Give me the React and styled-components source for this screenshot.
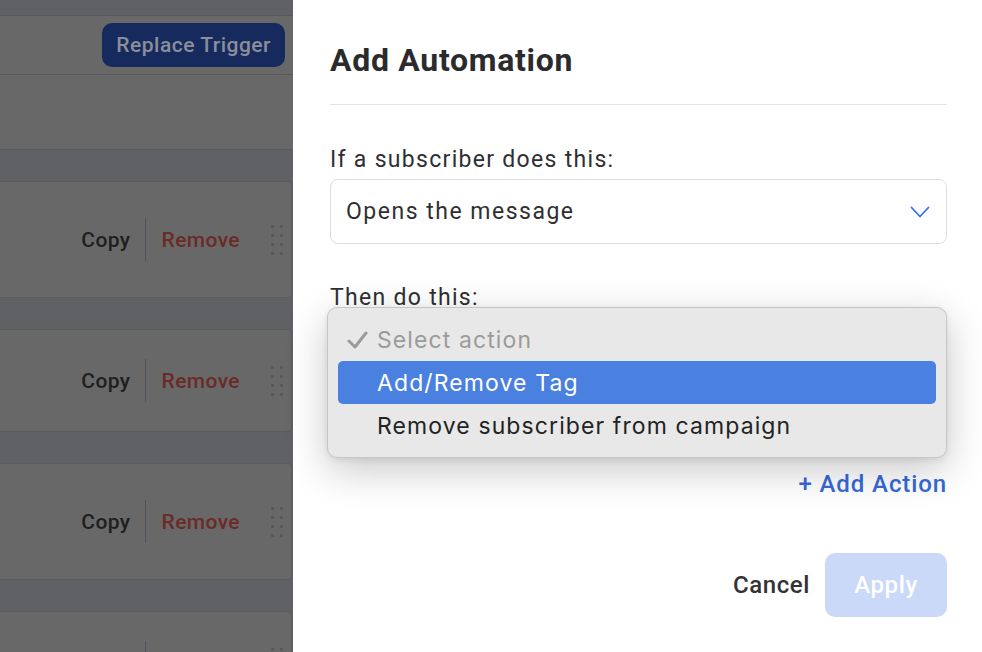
import React from "react";
import styled, { createGlobalStyle } from "styled-components";

const GlobalStyle = createGlobalStyle`
  html, body {
    margin: 0;
    padding: 0;
    height: 100%;
    overflow: hidden;
    background: #606165;
  }
  body {
    font-family: Roboto, "Liberation Sans", Arial, sans-serif;
  }
  #root {
    height: 100%;
  }
`;

const Page = styled.div`
  display: flex;
  height: 652px;
  width: 982px;
`;

/* dimmed page behind the drawer */
const Backdrop = styled.div`
  width: 293px;
  flex-shrink: 0;
  display: flex;
  flex-direction: column;
  background: #606165;
  overflow: hidden;

  & > * {
    flex-shrink: 0;
  }
`;

const TopStrip = styled.div`
  height: 15px;
  border-bottom: 1px solid #58595d;
`;

const HeaderPanel = styled.div`
  height: 59px;
  background: #686868;
  border-bottom: 1px solid #5a5b5f;
  display: flex;
  justify-content: flex-end;
  align-items: flex-start;
  padding: 7px 8px 0 0;
  box-sizing: border-box;
`;

const ReplaceButton = styled.div`
  height: 44px;
  padding: 0 14px;
  border-radius: 10px;
  background: #172a5e;
  color: #8a8f99;
  font-size: 21px;
  letter-spacing: 0.5px;
  font-weight: 500;
  display: flex;
  align-items: center;
`;

const EmptyPanel = styled.div`
  height: 75px;
  background: #686868;
  border-bottom: 1px solid #5a5b5f;
  box-sizing: border-box;
`;

const Card = styled.div`
  height: ${(p) => p.$h}px;
  margin-top: 31px;
  width: 292px;
  background: #686868;
  border: 1px solid #5a5b5f;
  border-left: none;
  border-radius: 0 4px 4px 0;
  box-sizing: border-box;
  display: flex;
  align-items: center;
  justify-content: flex-end;
  padding-right: 8px;
`;

const CardAction = styled.span`
  font-size: 21px;
  letter-spacing: 0.4px;
  font-weight: 500;
  color: ${(p) => (p.$danger ? "#6b2b27" : "#1f1f20")};
`;

const VSep = styled.div`
  width: 1px;
  height: 43px;
  background: #50535d;
  margin: 0 16px 0 14px;
`;

const Dots = styled.div`
  display: grid;
  grid-template-columns: 3px 3px;
  column-gap: 6px;
  row-gap: 6px;
  margin-left: 31px;
`;

const Dot = styled.span`
  width: 3px;
  height: 3px;
  background: #58595e;
`;

/* drawer */
const Drawer = styled.div`
  flex: 1;
  background: #ffffff;
  padding: 40px 35px 0 37px;
  box-sizing: border-box;
  display: flex;
  flex-direction: column;
`;

const Title = styled.h2`
  margin: 0;
  font-size: 32px;
  line-height: 40px;
  letter-spacing: 0.7px;
  font-weight: 700;
  color: #2b2b2d;
`;

const Rule = styled.div`
  height: 1px;
  background: #e1e1e8;
  margin: 24px 0 0;
`;

const Label = styled.div`
  font-size: 23px;
  line-height: 28px;
  letter-spacing: 1.3px;
  color: #2f2f31;
  margin-top: ${(p) => p.$top}px;
`;

const Field = styled.div`
  position: relative;
  margin-top: 5px;
`;

const SelectBox = styled.div`
  height: 65px;
  box-sizing: border-box;
  border: 1px solid ${(p) => (p.$focused ? "#3a6ee8" : "#dcdde3")};
  border-width: ${(p) => (p.$focused ? "2px" : "1px")};
  border-radius: 8px;
  display: flex;
  align-items: center;
  justify-content: space-between;
  padding: 0 16px 0 15px;
  font-size: 23px;
  letter-spacing: 1.5px;
  color: #2f2f31;
`;

const Popup = styled.div`
  position: absolute;
  top: -10px;
  left: -3px;
  right: 0;
  height: 151px;
  box-sizing: border-box;
  background: #e8e8e8;
  border: 1px solid #c6c6c6;
  border-radius: 10px;
  box-shadow: 0 12px 40px rgba(0, 0, 0, 0.22), 0 2px 6px rgba(0, 0, 0, 0.08);
  padding: 10px 10px;
  display: flex;
  flex-direction: column;
  font-family: Inter, Roboto, "Liberation Sans", sans-serif;
  font-size: 23px;
  z-index: 5;
`;

const Option = styled.div`
  height: 43px;
  border-radius: 5px;
  display: flex;
  align-items: center;
  padding-left: 9px;
  color: ${(p) => (p.$muted ? "#9b9b9b" : p.$active ? "#ffffff" : "#232323")};
  background: ${(p) => (p.$active ? "#4a80e0" : "transparent")};
  letter-spacing: 1.1px;
`;

const CheckSlot = styled.span`
  width: 30px;
  display: flex;
  align-items: center;
`;

const AddAction = styled.div`
  align-self: flex-end;
  margin-top: 88px;
  font-size: 24px;
  line-height: 28px;
  letter-spacing: 0.9px;
  font-weight: 500;
  color: #3669d9;
`;

const Footer = styled.div`
  display: flex;
  justify-content: flex-end;
  align-items: center;
  gap: 15px;
  margin-top: 55px;
`;

const CancelButton = styled.span`
  font-size: 24px;
  letter-spacing: 0.6px;
  font-weight: 500;
  color: #333335;
`;

const ApplyButton = styled.div`
  width: 122px;
  height: 64px;
  border-radius: 10px;
  background: #c9d9f7;
  color: #ffffff;
  font-size: 24px;
  letter-spacing: 0.6px;
  font-weight: 500;
  display: flex;
  align-items: center;
  justify-content: center;
`;

const Chevron = () => (
  <svg width="20" height="12" viewBox="0 0 20 12">
    <polyline points="1.5,1.5 10,10.5 18.5,1.5" fill="none" stroke="#3a6ee8" strokeWidth="1.8" strokeLinecap="round" strokeLinejoin="round" />
  </svg>
);

const Check = () => (
  <svg width="21" height="18" viewBox="0 0 21 18">
    <polyline points="2,10 8,16 19,2" fill="none" stroke="#9b9b9b" strokeWidth="3" strokeLinecap="round" strokeLinejoin="round" />
  </svg>
);

const cards = [117, 103, 117, 103];

export default function App() {
  return (
    <>
      <GlobalStyle />
      <Page>
        <Backdrop>
          <TopStrip />
          <HeaderPanel>
            <ReplaceButton>Replace Trigger</ReplaceButton>
          </HeaderPanel>
          <EmptyPanel />
          {cards.map((h, i) => (
            <Card key={i} $h={h}>
              <CardAction>Copy</CardAction>
              <VSep />
              <CardAction $danger>Remove</CardAction>
              <Dots>
                {Array.from({ length: 8 }).map((_, j) => (
                  <Dot key={j} />
                ))}
              </Dots>
            </Card>
          ))}
        </Backdrop>

        <Drawer>
          <Title>Add Automation</Title>
          <Rule />

          <Label $top={41}>If a subscriber does this:</Label>
          <Field>
            <SelectBox>
              <span>Opens the message</span>
              <Chevron />
            </SelectBox>
          </Field>

          <Label $top={40}>Then do this:</Label>
          <Field>
            <SelectBox $focused>
              <span>Select action</span>
              <Chevron />
            </SelectBox>
            <Popup>
              <Option $muted>
                <CheckSlot>
                  <Check />
                </CheckSlot>
                Select action
              </Option>
              <Option $active>
                <CheckSlot />
                Add/Remove Tag
              </Option>
              <Option>
                <CheckSlot />
                Remove subscriber from campaign
              </Option>
            </Popup>
          </Field>

          <AddAction>+ Add Action</AddAction>

          <Footer>
            <CancelButton>Cancel</CancelButton>
            <ApplyButton>Apply</ApplyButton>
          </Footer>
        </Drawer>
      </Page>
    </>
  );
}
